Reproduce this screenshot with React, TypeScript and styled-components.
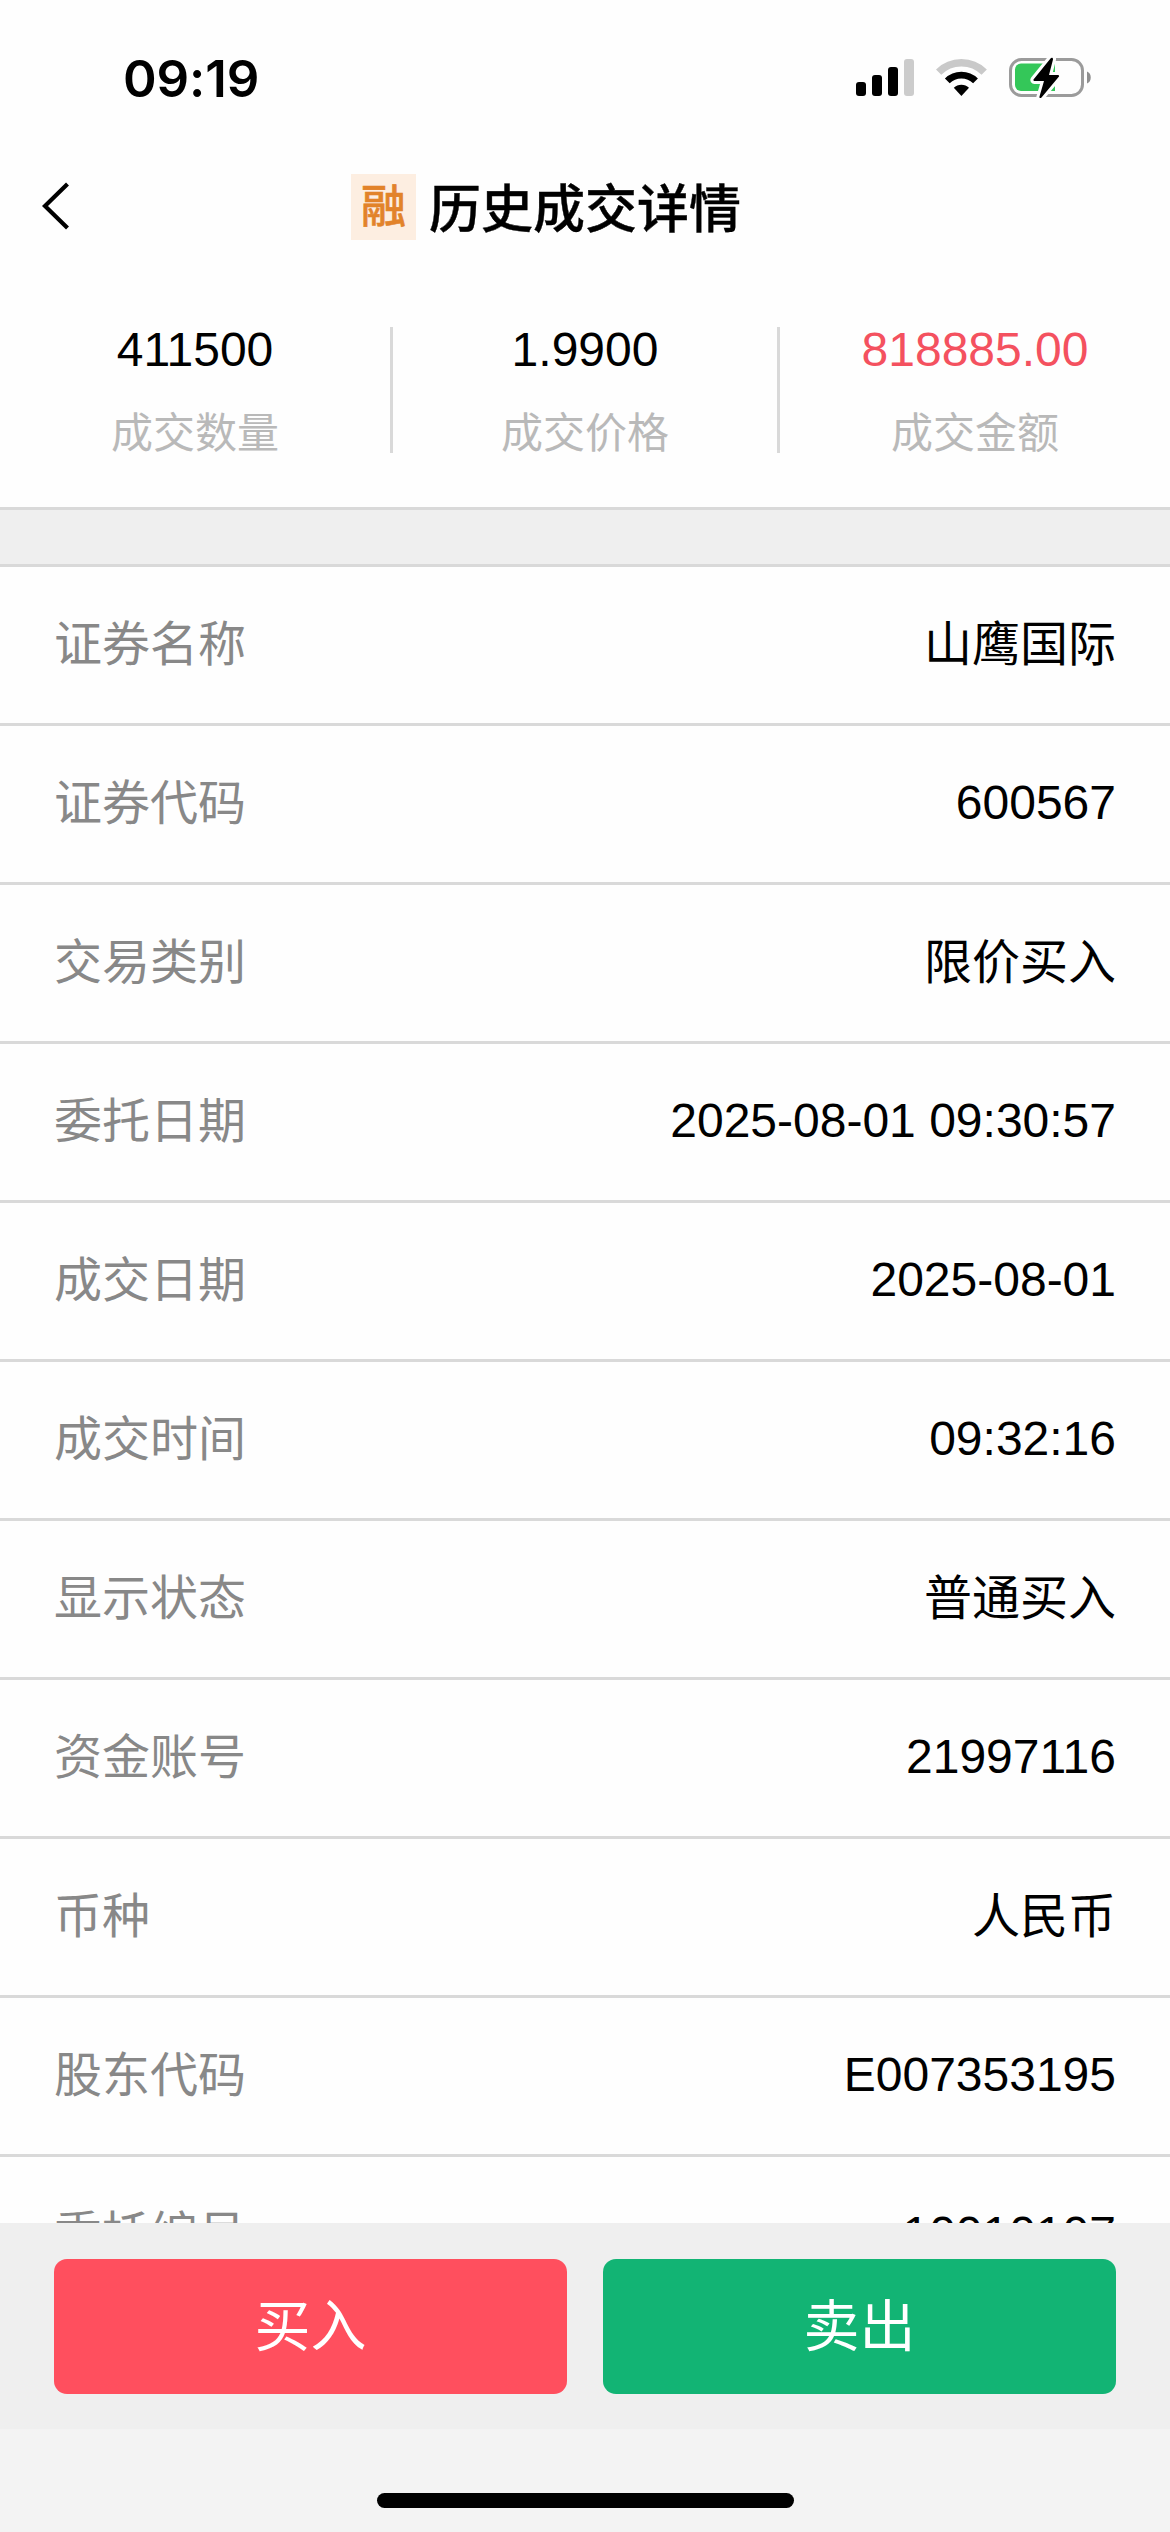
import React from 'react';
import styled, { createGlobalStyle } from 'styled-components';

const Global = createGlobalStyle`
  * { box-sizing: border-box; }
  body { margin: 0; background: #fff; }
`;

const Screen = styled.main`
  width: 1170px;
  height: 2532px;
  display: flex;
  flex-direction: column;
  overflow: hidden;
  background: #fefefe;
  color: #000;
  font-family: 'Liberation Sans', 'Noto Sans CJK SC', sans-serif;
`;

const StatusBar = styled.div`
  height: 141px;
  flex: none;
  display: flex;
  justify-content: space-between;
  align-items: flex-start;
  padding: 46px 78px 0 123px;
`;

const Clock = styled.span`
  font: 600 51px/65px Inter, sans-serif;
  letter-spacing: -0.1px;
`;

const StatusIcons = styled.div`
  display: flex;
  gap: 20px;
  padding-top: 10px;

  svg { display: block; }
`;

const NavBar = styled.header`
  height: 132px;
  flex: none;
  display: grid;
  grid-template-columns: 351px auto 1fr;
  align-items: center;
`;

const BackButton = styled.button`
  justify-self: start;
  padding: 0 0 2px 40px;
  border: 0;
  background: none;

  svg { display: block; }
`;

const Heading = styled.div`
  display: flex;
  align-items: center;
  gap: 13px;
`;

const Badge = styled.span`
  width: 65px;
  height: 66px;
  background: #fdeee1;
  color: #e2832a;
  font-size: 45px;
  font-weight: 500;
  line-height: 67px;
  text-align: center;
  -webkit-text-stroke: 0.6px #e2832a;
`;

const Title = styled.h1`
  margin: 0;
  padding-top: 5px;
  font-size: 52px;
  font-weight: 500;
  line-height: 66px;
  -webkit-text-stroke: 0.4px #000;
`;

const Summary = styled.section`
  height: 237px;
  flex: none;
  display: flex;
  align-items: flex-start;
  padding-top: 54px;
  border-bottom: 3px solid #d9d9d9;
`;

const Metric = styled.div`
  width: 390px;
  height: 126px;
  display: flex;
  flex-direction: column;
  align-items: center;

  &:nth-child(2) {
    border: solid #d9d9d9;
    border-width: 0 3px;
  }
`;

const MetricValue = styled.span<{ $accent?: boolean }>`
  font-size: 48px;
  line-height: 46px;
  color: ${(p) => (p.$accent ? '#f4515f' : '#000')};
`;

const MetricLabel = styled.span`
  margin-top: 31px;
  font-size: 42px;
  line-height: 60px;
  color: #b9b9b9;
`;

const Band = styled.div`
  height: 57px;
  flex: none;
  background: #efefef;
  border-bottom: 3px solid #d9d9d9;
`;

const Details = styled.dl`
  flex: 1;
  min-height: 0;
  margin: 0;
  overflow: hidden;
`;

const Row = styled.div`
  height: 159px;
  display: flex;
  justify-content: space-between;
  align-items: center;
  padding: 0 54px;
  border-bottom: 3px solid #d9d9d9;
  font-size: 48px;
  line-height: 72px;
`;

const Term = styled.dt`
  color: #888;
`;

const Value = styled.dd<{ $latin: boolean }>`
  margin: 0;
  padding-bottom: ${(p) => (p.$latin ? 3 : 0)}px;
`;

const Actions = styled.footer`
  height: 206px;
  flex: none;
  display: flex;
  gap: 36px;
  padding: 36px 54px 0;
  background: #efefef;
`;

const TradeButton = styled.button<{ $side: 'buy' | 'sell' }>`
  flex: 1;
  height: 135px;
  padding: 0 0 10px;
  border: 0;
  border-radius: 13px;
  background: ${(p) => (p.$side === 'buy' ? '#ff4f5e' : '#12b474')};
  color: #fff;
  font: 56px/80px 'Noto Sans CJK SC', sans-serif;
`;

const HomeArea = styled.div`
  height: 103px;
  flex: none;
  display: flex;
  justify-content: center;
  padding-top: 64px;
  background: #f3f3f3;
`;

const HomeIndicator = styled.div`
  width: 417px;
  height: 15px;
  border-radius: 8px;
  background: #000;
`;

const metrics = [
  { value: '411500', label: '成交数量' },
  { value: '1.9900', label: '成交价格' },
  { value: '818885.00', label: '成交金额', accent: true },
];

const details = [
  ['证券名称', '山鹰国际'],
  ['证券代码', '600567'],
  ['交易类别', '限价买入'],
  ['委托日期', '2025-08-01 09:30:57'],
  ['成交日期', '2025-08-01'],
  ['成交时间', '09:32:16'],
  ['显示状态', '普通买入'],
  ['资金账号', '21997116'],
  ['币种', '人民币'],
  ['股东代码', 'E007353195'],
  ['委托编号', '10010107'],
];

const SignalIcon = () => (
  <svg width="60" height="42" viewBox="0 0 60 42">
    <rect x="0" y="26" width="10" height="14" rx="3" />
    <rect x="16" y="19" width="10" height="21" rx="3" />
    <rect x="32" y="11" width="10" height="29" rx="3" />
    <rect x="48" y="3" width="10" height="37" rx="3" fill="#ccc" />
  </svg>
);

const WifiIcon = () => (
  <svg width="52" height="42" viewBox="0 0 52 42">
    <path d="M2.6 16.2a32.2 32.2 0 0 1 45.6 0" fill="none" stroke="#c9c9c9" strokeWidth="7.5" />
    <path d="M11.3 24.9a20 20 0 0 1 28.2 0" fill="none" stroke="#000" strokeWidth="6.8" />
    <path d="M25.4 40l-7.6-8.2a10.7 10.7 0 0 1 15.2 0z" />
  </svg>
);

const BatteryIcon = () => (
  <svg width="84" height="44" viewBox="0 0 84 44">
    <rect x="2.5" y="3.5" width="72" height="36" rx="11" fill="none" stroke="#9b9b9b" strokeWidth="3" />
    <path d="M79 15.5c5 1.7 5 10.3 0 12z" fill="#8f8f8f" />
    <path d="M13 7.5h34v27.5h-34a6 6 0 0 1-6-6v-15.5a6 6 0 0 1 6-6z" fill="#34c759" />
    <path
      d="M42.5 2.5L25.5 23.5a1 1 0 0 0 1 1.500h9.500l-4.500 15.500c-.4 1.700 1 2 2 1L51 20.500a1 1 0 0 0-1-1.500h-9l4-15.500c.3-1.700-1.500-2.200-2.500-1z"
      stroke="#fefefe"
      strokeWidth="6"
      strokeLinejoin="round"
      paintOrder="stroke"
    />
  </svg>
);

const ChevronIcon = () => (
  <svg width="32" height="52" viewBox="0 0 32 52">
    <path d="M27.5 4L5 26l22.5 22" fill="none" stroke="#000" strokeWidth="4.2" />
  </svg>
);

export default function App() {
  return (
    <Screen>
      <Global />
      <StatusBar>
        <Clock>09:19</Clock>
        <StatusIcons>
          <SignalIcon />
          <WifiIcon />
          <BatteryIcon />
        </StatusIcons>
      </StatusBar>
      <NavBar>
        <BackButton aria-label="返回">
          <ChevronIcon />
        </BackButton>
        <Heading>
          <Badge>融</Badge>
          <Title>历史成交详情</Title>
        </Heading>
      </NavBar>
      <Summary>
        {metrics.map((m) => (
          <Metric key={m.label}>
            <MetricValue $accent={m.accent}>{m.value}</MetricValue>
            <MetricLabel>{m.label}</MetricLabel>
          </Metric>
        ))}
      </Summary>
      <Band />
      <Details>
        {details.map(([term, value]) => (
          <Row key={term}>
            <Term>{term}</Term>
            <Value $latin={/^[\x20-\x7e]+$/.test(value)}>{value}</Value>
          </Row>
        ))}
      </Details>
      <Actions>
        <TradeButton $side="buy">买入</TradeButton>
        <TradeButton $side="sell">卖出</TradeButton>
      </Actions>
      <HomeArea>
        <HomeIndicator />
      </HomeArea>
    </Screen>
  );
}
